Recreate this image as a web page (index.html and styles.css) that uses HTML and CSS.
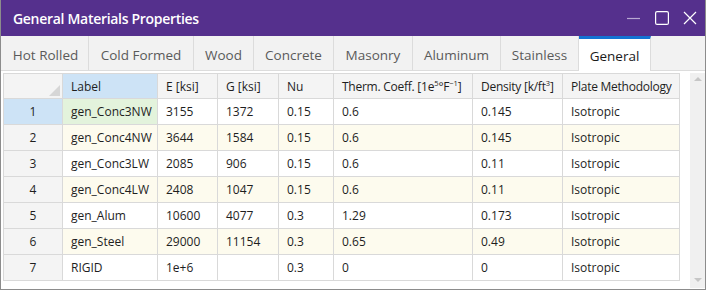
FILE: index.html
```html
<!DOCTYPE html>
<html lang="en">

<head>
    <meta charset="UTF-8">
    <title>General Materials Properties</title>
    <link rel="stylesheet" href="styles.css">
</head>

<body>
    <div class="window">
        <div class="titlebar">
            <span class="title">General Materials Properties</span>
            <div class="controls">
                <svg width="14" height="14" viewBox="0 0 14 14"><line x1="0" y1="7.5" x2="13" y2="7.5" stroke="#b9a8d2" stroke-width="1.2"/></svg>
                <svg width="14" height="14" viewBox="0 0 14 14"><rect x="0.6" y="0.6" width="12.8" height="12.8" rx="1.5" fill="none" stroke="#fff" stroke-width="1.2"/></svg>
                <svg width="14" height="14" viewBox="0 0 14 14"><path d="M1 1 L13 13 M13 1 L1 13" stroke="#fff" stroke-width="1.2"/></svg>
            </div>
        </div>
        <div class="tabs">
            <div class="tab t1">Hot Rolled</div>
            <div class="tab t2">Cold Formed</div>
            <div class="tab t3">Wood</div>
            <div class="tab t4">Concrete</div>
            <div class="tab t5">Masonry</div>
            <div class="tab t6">Aluminum</div>
            <div class="tab t7">Stainless</div>
            <div class="tab t8 active">General</div>
        </div>
        <div class="content">
            <table class="grid">
                <colgroup>
                    <col style="width:59px">
                    <col style="width:95px">
                    <col style="width:60px">
                    <col style="width:61px">
                    <col style="width:55px">
                    <col style="width:139px">
                    <col style="width:90px">
                    <col style="width:117px">
                </colgroup>
                <tr class="head">
                    <th class="corner"><span class="tri"></span></th>
                    <th class="sel">Label</th>
                    <th>E [ksi]</th>
                    <th>G [ksi]</th>
                    <th>Nu</th>
                    <th class="tight">Therm. Coeff. [1e<sup>5</sup>°F<sup>−1</sup>]</th>
                    <th class="tight">Density [k/ft<sup>3</sup>]</th>
                    <th class="tight">Plate Methodology</th>
                </tr>
                <tr>
                    <td class="rh sel">1</td><td class="cur">gen_Conc3NW</td><td>3155</td><td>1372</td><td>0.15</td><td>0.6</td><td>0.145</td><td>Isotropic</td>
                </tr>
                <tr class="alt">
                    <td class="rh">2</td><td>gen_Conc4NW</td><td>3644</td><td>1584</td><td>0.15</td><td>0.6</td><td>0.145</td><td>Isotropic</td>
                </tr>
                <tr>
                    <td class="rh">3</td><td>gen_Conc3LW</td><td>2085</td><td>906</td><td>0.15</td><td>0.6</td><td>0.11</td><td>Isotropic</td>
                </tr>
                <tr class="alt">
                    <td class="rh">4</td><td>gen_Conc4LW</td><td>2408</td><td>1047</td><td>0.15</td><td>0.6</td><td>0.11</td><td>Isotropic</td>
                </tr>
                <tr>
                    <td class="rh">5</td><td>gen_Alum</td><td>10600</td><td>4077</td><td>0.3</td><td>1.29</td><td>0.173</td><td>Isotropic</td>
                </tr>
                <tr class="alt">
                    <td class="rh">6</td><td>gen_Steel</td><td>29000</td><td>11154</td><td>0.3</td><td>0.65</td><td>0.49</td><td>Isotropic</td>
                </tr>
                <tr>
                    <td class="rh">7</td><td>RIGID</td><td>1e+6</td><td></td><td>0.3</td><td>0</td><td>0</td><td>Isotropic</td>
                </tr>
            </table>
            <div class="scrollbar">
                <span class="arrow up"></span>
                <span class="arrow down"></span>
            </div>
        </div>
    </div>
</body>

</html>
```

FILE: styles.css
```css
* {
    margin: 0px;
    padding: 0px;
    box-sizing: border-box;
}

body {
    font-family: "Open Sans", "Noto Sans", sans-serif;
    background-color: #ffffff;
}

.window {
    width: 706px;
    height: 290px;
    border: 1px solid #8c8c8c;
    border-top: none;
    display: flex;
    flex-direction: column;
    background-color: #ffffff;
}

.titlebar {
    height: 36px;
    background-color: #55308d;
    display: flex;
    align-items: center;
    justify-content: space-between;
    padding: 0 8px 0 12px;
}

.title {
    color: white;
    font-size: 14px;
    font-weight: 600;
    letter-spacing: -0.3px;
}

.controls {
    display: flex;
    gap: 14px;
    align-items: center;
}

.controls svg {
    display: block;
}

.tabs {
    height: 35px;
    display: flex;
    background-color: #f2f2f2;
    border-bottom: 1px solid #dcdcdc;
    padding-left: 2px;
}

.tab {
    border-right: 1px solid #dcdcdc;
    color: #5a5a5a;
    font-size: 13.5px;
    display: flex;
    align-items: center;
    justify-content: center;
    padding-top: 3px;
}

.t1 { width: 86px; }
.t2 { width: 105px; }
.t3 { width: 60px; }
.t4 { width: 80px; }
.t5 { width: 79px; }
.t6 { width: 88px; }
.t7 { width: 78px; }
.t8 { width: 72px; }

.tab.active {
    background-color: white;
    color: #1a1a1a;
    border-top: 3px solid #1373d3;
    margin-bottom: -1px;
    padding-top: 1px;
}

.content {
    flex: 1;
    display: flex;
    padding: 2px 0 0 2px;
}

.grid {
    border-collapse: collapse;
    table-layout: fixed;
    width: 677px;
    height: 208px;
    font-size: 12px;
    color: #1e1e1e;
}

.grid th,
.grid td {
    border: 1px solid #d9d9d9;
    text-align: left;
    padding: 0 0 0 8px;
    font-weight: normal;
    height: 26px;
    white-space: nowrap;
    overflow: hidden;
}

.grid th {
    height: 25px;
    background-color: #f4f4f4;
}

.grid th.tight {
    letter-spacing: -0.25px;
}

.grid sup {
    font-size: 7.5px;
    vertical-align: 5px;
    line-height: 0;
    letter-spacing: 0;
}

.grid th.sel {
    background-color: #cde3f6;
}

.corner {
    position: relative;
}

.tri {
    position: absolute;
    right: 2px;
    bottom: 2px;
    width: 0;
    height: 0;
    border-left: 11px solid transparent;
    border-bottom: 11px solid #d6d6d6;
}

.grid td.rh {
    background-color: #f4f4f4;
    text-align: center;
    padding: 0;
}

.grid td.rh.sel {
    background-color: #cde3f6;
}

.grid td.cur {
    background-color: #e3f3dc;
}

.alt td {
    background-color: #fdfbee;
}

.scrollbar {
    width: 15px;
    margin-left: auto;
    margin-right: 0;
    margin-bottom: 1px;
    background-color: #f0f0f0;
    position: relative;
}

.arrow {
    position: absolute;
    left: 4px;
    width: 0;
    height: 0;
    border-left: 4px solid transparent;
    border-right: 4px solid transparent;
}

.arrow.up {
    top: 4px;
    border-bottom: 4px solid #c6c6c6;
}

.arrow.down {
    bottom: 6px;
    border-top: 4px solid #c6c6c6;
}
```
